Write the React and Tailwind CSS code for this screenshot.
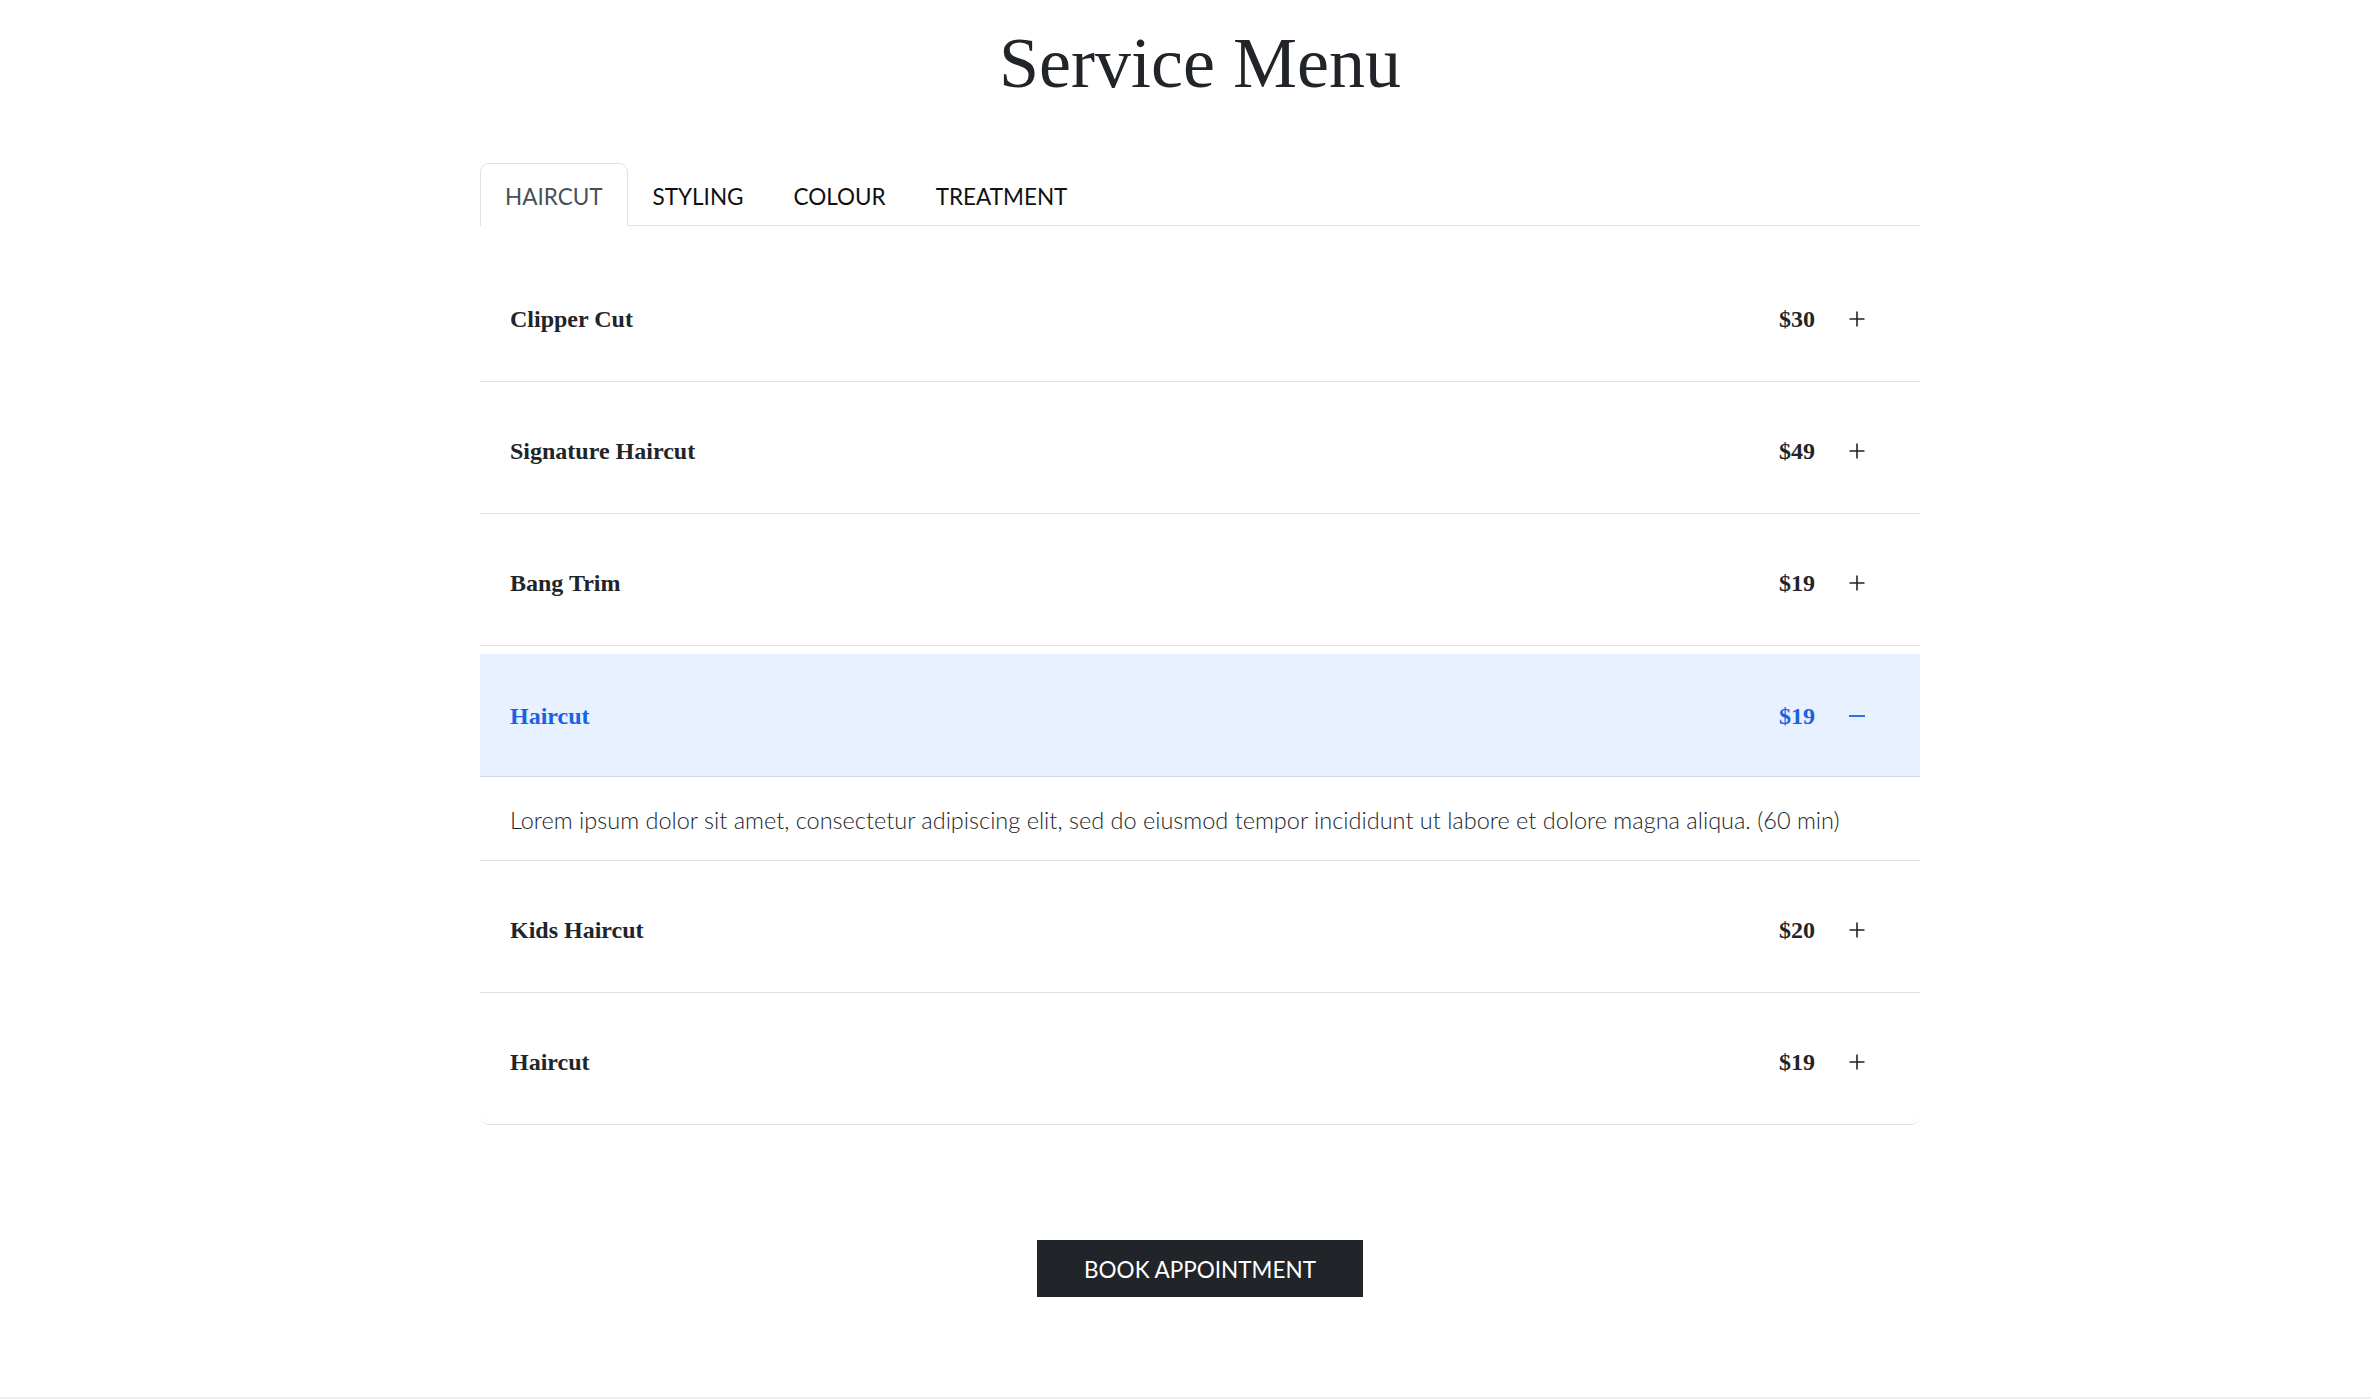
import React from "react";

function Plus() {
  return (
    <svg width="16" height="16" viewBox="0 0 16 16" className="block">
      <path d="M8 0.5V15.5M0.5 8H15.5" stroke="#212529" strokeWidth="1.6" fill="none" />
    </svg>
  );
}

function Minus() {
  return (
    <svg width="16" height="16" viewBox="0 0 16 16" className="block">
      <path d="M0 8H16" stroke="#1a62e4" strokeWidth="1.8" fill="none" />
    </svg>
  );
}

const rowsBefore = [
  { name: "Clipper Cut", price: "$30" },
  { name: "Signature Haircut", price: "$49" },
  { name: "Bang Trim", price: "$19" },
];
const rowsAfter = [
  { name: "Kids Haircut", price: "$20" },
  { name: "Haircut", price: "$19", last: true },
];

function Row({ name, price, last }) {
  return (
    <div
      className={
        "flex h-[132px] items-center border-b border-[#e2e2e2] pl-[30px] pr-[55px] pt-[6px] " +
        (last ? "rounded-b-[9px]" : "")
      }
    >
      <span className="font-['Liberation_Serif',serif] text-[24px] font-bold text-[#212529]">{name}</span>
      <span className="ml-auto font-['Liberation_Serif',serif] text-[24px] font-bold text-[#212529]">{price}</span>
      <span className="ml-[34px]">
        <Plus />
      </span>
    </div>
  );
}

export default function App() {
  const tabs = ["HAIRCUT", "STYLING", "COLOUR", "TREATMENT"];
  return (
    <div className="bg-white font-['Lato',sans-serif]">
      <div className="pl-[480px]">
        <div className="w-[1440px]">
          <h1 className="pt-[20px] text-center font-['Liberation_Serif',serif] text-[72px] font-normal leading-[86px] text-[#212529]">
            Service Menu
          </h1>
          <div className="mt-[57px] flex border-b border-[#dee2e6]">
            {tabs.map((t, i) => (
              <div
                key={t}
                className={
                  "-mb-px px-[24px] pb-[10px] pt-[15px] text-[22.5px] leading-[36px] " +
                  (i === 0
                    ? "rounded-t-[9px] border border-[#dee2e6] border-b-white bg-white text-[#495057]"
                    : "border border-transparent text-[#111111]")
                }
              >
                {t}
              </div>
            ))}
          </div>
          <div className="mt-[24px]">
            {rowsBefore.map((r) => (
              <Row key={r.name} {...r} />
            ))}
            <div className="border-b border-[#e2e2e2] pt-[8px]">
              <div className="flex h-[123px] items-center bg-[#e7f1ff] pl-[30px] pr-[55px] shadow-[inset_0_-1px_0_rgba(0,0,0,0.1)]">
                <span className="font-['Liberation_Serif',serif] text-[24px] font-bold text-[#1a62e4]">Haircut</span>
                <span className="ml-auto font-['Liberation_Serif',serif] text-[24px] font-bold text-[#1a62e4]">$19</span>
                <span className="ml-[34px]">
                  <Minus />
                </span>
              </div>
              <div className="flex h-[83px] items-center pl-[30px] pt-[4px] text-[23.5px] font-light text-[#212529]">
                Lorem ipsum dolor sit amet, consectetur adipiscing elit, sed do eiusmod tempor incididunt ut labore et dolore magna aliqua. (60 min)
              </div>
            </div>
            {rowsAfter.map((r) => (
              <Row key={r.name + "2"} {...r} />
            ))}
          </div>
          <div className="mt-[115px] flex justify-center">
            <button className="h-[57px] w-[326px] bg-[#212529] pt-[3px] text-[22.5px] text-white">BOOK APPOINTMENT</button>
          </div>
        </div>
      </div>
      <div className="mt-[100px] h-[2px] bg-[#ececec]" />
    </div>
  );
}
